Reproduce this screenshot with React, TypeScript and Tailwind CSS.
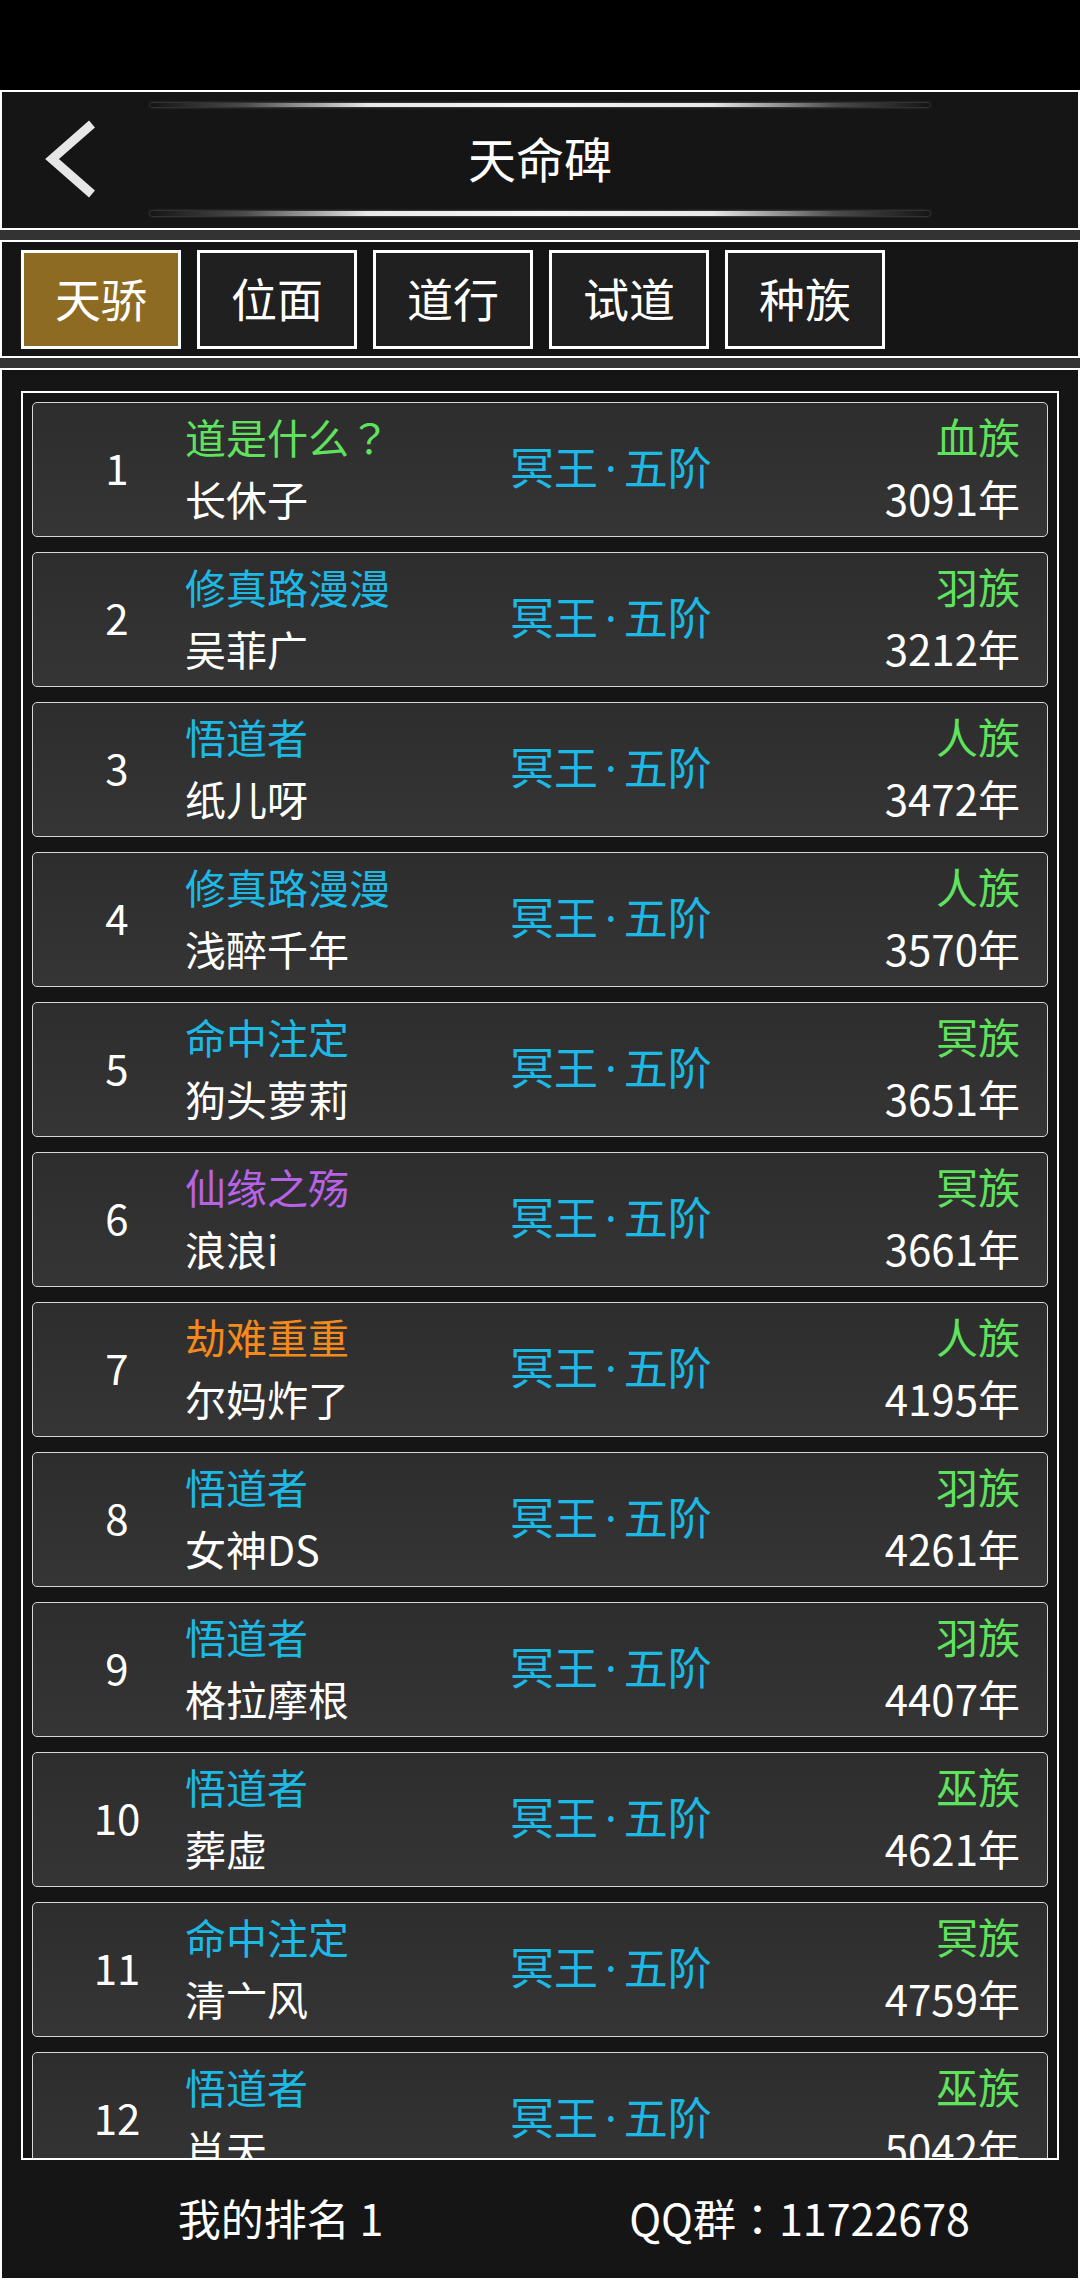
import React from "react";

type Row = {
  rank: number;
  title: React.ReactNode;
  titleColor: string;
  name: string;
  race: string;
  age: string;
};

const GREEN = "text-[#5fe35f]";
const CYAN = "text-[#1cb9e6]";
const PURPLE = "text-[#b862e8]";
const ORANGE = "text-[#f48a1c]";

// full-width punctuation drawn centred, as in the game font
function FW({ c }: { c: string }) {
  return <span className="font-['Noto_Sans_CJK_TC',sans-serif]">{c}</span>;
}

const rows: Row[] = [
  { rank: 1, title: <>道是什么<FW c="？" /></>, titleColor: GREEN, name: "长休子", race: "血族", age: "3091年" },
  { rank: 2, title: "修真路漫漫", titleColor: CYAN, name: "吴菲广", race: "羽族", age: "3212年" },
  { rank: 3, title: "悟道者", titleColor: CYAN, name: "纸儿呀", race: "人族", age: "3472年" },
  { rank: 4, title: "修真路漫漫", titleColor: CYAN, name: "浅醉千年", race: "人族", age: "3570年" },
  { rank: 5, title: "命中注定", titleColor: CYAN, name: "狗头萝莉", race: "冥族", age: "3651年" },
  { rank: 6, title: "仙缘之殇", titleColor: PURPLE, name: "浪浪i", race: "冥族", age: "3661年" },
  { rank: 7, title: "劫难重重", titleColor: ORANGE, name: "尔妈炸了", race: "人族", age: "4195年" },
  { rank: 8, title: "悟道者", titleColor: CYAN, name: "女神DS", race: "羽族", age: "4261年" },
  { rank: 9, title: "悟道者", titleColor: CYAN, name: "格拉摩根", race: "羽族", age: "4407年" },
  { rank: 10, title: "悟道者", titleColor: CYAN, name: "葬虚", race: "巫族", age: "4621年" },
  { rank: 11, title: "命中注定", titleColor: CYAN, name: "清亠风", race: "冥族", age: "4759年" },
  { rank: 12, title: "悟道者", titleColor: CYAN, name: "肖天", race: "巫族", age: "5042年" },
];

const tabs = ["天骄", "位面", "道行", "试道", "种族"];

function GlowLine({ h }: { h: string }) {
  return (
    <div
      className={`${h} w-[780px] mx-auto rounded-full bg-[linear-gradient(90deg,transparent,#4a4a4a_12%,#e8e8e8_28%,#f6f6f6_50%,#e8e8e8_72%,#4a4a4a_88%,transparent)] shadow-[0_0_3px_rgba(255,255,255,0.35)]`}
    />
  );
}

export default function App() {
  return (
    <div className="w-[1080px] h-[2280px] bg-black flex flex-col font-['Noto_Sans_CJK_SC','Noto_Sans',sans-serif] text-white">
      {/* status bar */}
      <div className="h-[90px] shrink-0 bg-black"></div>

      <div className="flex-1 flex flex-col gap-[10px] bg-[#333333] min-h-0">
        {/* header */}
        <div className="h-[140px] shrink-0 border-2 border-white bg-[#151515] flex flex-col pt-[11px]">
          <GlowLine h="h-[4px]" />
          <div className="h-[104px] grid grid-cols-[1fr_auto_1fr] items-center">
            <div className="pl-[42px] flex items-center">
              <svg width="54" height="80" viewBox="0 0 54 80">
                <polyline
                  points="48,5 8,40 48,75"
                  fill="none"
                  stroke="#e6e6e6"
                  strokeWidth="9"
                  strokeLinejoin="miter"
                />
              </svg>
            </div>
            <div className="text-[48px] leading-none pb-[5px]">天命碑</div>
            <div></div>
          </div>
          <GlowLine h="h-[5px]" />
        </div>

        {/* tabs */}
        <div className="h-[118px] shrink-0 border-2 border-white bg-[#151515] flex gap-[16px] pl-[19px] pt-[8px]">
          {tabs.map((t, i) => (
            <div
              key={t}
              className={`w-[160px] h-[99px] border-[3px] border-white flex items-center justify-center text-[46px] pb-[5px] ${
                i === 0 ? "bg-[#8e6b23]" : "bg-[#202020]"
              }`}
            >
              {t}
            </div>
          ))}
        </div>

        {/* list */}
        <div className="flex-1 min-h-0 border-2 border-white bg-[#151515] flex flex-col px-[19px] pt-[21px]">
          <div className="h-[1769px] shrink-0 border-2 border-white overflow-hidden px-[9px] pt-[9px] flex flex-col gap-[15px]">
            {rows.map((r) => (
              <div
                key={r.rank}
                className="h-[135px] shrink-0 rounded-[5px] border border-[#d6d6d6] bg-[linear-gradient(180deg,#2d2d2d,#353535)] flex items-center pb-[6px]"
              >
                <div className="w-[152px] pl-[16px] text-center text-[42px] leading-none">{r.rank}</div>
                <div className="w-[325px] flex flex-col text-[41px] leading-[62px]">
                  <span className={r.titleColor}>{r.title}</span>
                  <span>{r.name}</span>
                </div>
                <div className={`text-[44px] leading-none whitespace-nowrap ${CYAN}`}>
                  冥王<span className="font-['Noto_Sans',sans-serif] mx-[7px]">·</span>五阶
                </div>
                <div className="ml-auto pr-[27px] flex flex-col items-end text-[42px] leading-[62px]">
                  <span className={GREEN}>{r.race}</span>
                  <span>{r.age}</span>
                </div>
              </div>
            ))}
          </div>
          <div className="flex-1 grid grid-cols-2 items-center text-[43px] pb-[4px]">
            <div className="text-center">我的排名 1</div>
            <div className="text-center">
              QQ群<FW c="：" />11722678
            </div>
          </div>
        </div>
      </div>
    </div>
  );
}
